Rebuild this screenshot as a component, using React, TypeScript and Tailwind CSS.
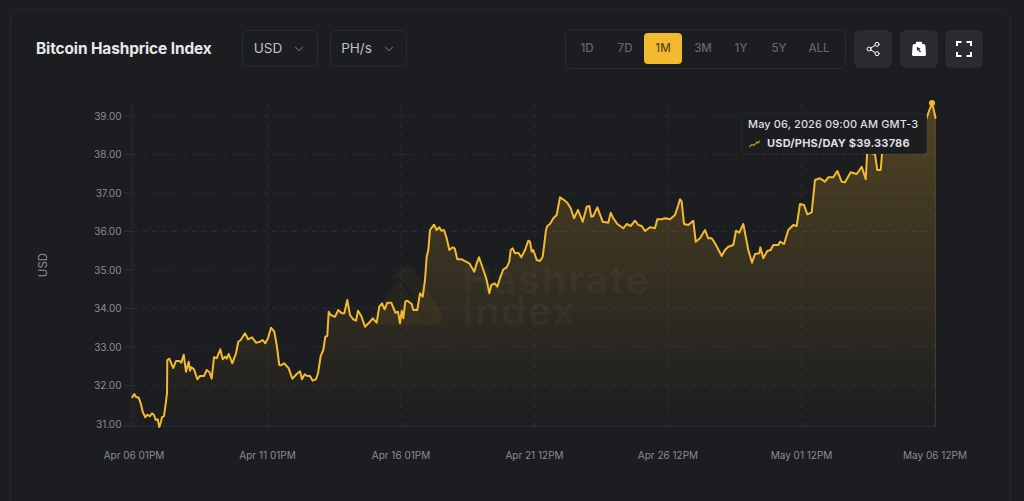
import { ChevronDown, Share2 } from 'lucide-react';

// 从参考图放大区域量出来的折线点，坐标换算回页面像素
type Pt = [number, number];

const toPage = (ox: number, oy: number, pts: Pt[]): Pt[] => pts.map(([x, y]) => [ox + x / 3, oy + y / 3]);

const linePoints: Pt[] = [
  ...toPage(90, 280, [
    [127,352],[133,342],[138,351],[146,353],[152,370],[158,395],[166,412],[172,404],[180,409],[186,400],[192,405],[197,420],[203,418],[208,441],[213,425],[216,412],[222,408],[228,365],[231,340],[232,240],[238,236],[244,250],[250,264],[258,243],[268,243],[274,248],[281,224],[288,275],[296,245],[300,272],[304,262],[312,268],[322,298],[330,288],[342,288],[350,270],[358,276],[365,296],[372,232],[380,235],[391,208],[398,238],[405,230],[410,236],[416,222],[427,250],[438,220],[445,185],[452,180],[465,160],[474,178],[486,172],[498,188],[510,185],[518,180],[526,190],[534,175],[543,143],[553,155],[560,195],[568,255],[574,256],[582,250],[596,265],[607,296],[620,282],[630,274],[636,298],[644,283],[652,288],[660,288],[668,302],[678,298],[684,280],[692,228],[700,210],[706,170],[712,168],[716,95],[722,105],[735,110],[745,90],[755,100],[763,100],[772,60],[780,105],[790,118],[798,122],[804,92],[814,108],[825,140],[840,125],[848,115],[860,128],[868,80],[876,70],[884,88],[892,68],[904,68],[916,98],[924,95],[930,130],[935,92],[940,115],[946,65],[952,62],[965,72],[970,90],[982,90],[990,40],[998,50],[1005,0],
  ]),
  ...toPage(360, 200, [
    [200,170],[205,150],[210,90],[222,74],[230,90],[238,82],[244,92],[252,90],[260,115],[268,150],[278,142],[284,145],[292,178],[305,178],[318,185],[328,190],[343,215],[350,190],[357,172],[365,195],[372,215],[380,240],[388,280],[394,255],[404,250],[412,260],[420,235],[430,208],[440,202],[448,185],[452,150],[458,145],[465,160],[475,158],[484,172],[495,150],[505,122],[510,125],[515,155],[520,150],[530,180],[540,183],[548,170],[558,90],[562,78],[570,72],[580,55],[590,45],[600,-8],[612,0],[622,8],[632,25],[642,55],[654,30],[668,65],[680,20],[688,18],[694,50],[700,48],[712,22],[728,65],[745,68],[752,38],[760,55],[772,72],[790,85],[800,72],[812,78],[825,62],[835,75],[845,78],[855,93],[870,82],[885,85],[892,58],[905,58],[915,55],[930,58],[945,45],[955,15],[960,-2],[965,5],[972,72],[985,75],[1000,62],
  ]),
  ...toPage(680, 150, [
    [47,275],[60,265],[75,240],[85,265],[95,265],[105,280],[125,318],[135,300],[145,290],[160,285],[168,242],[178,248],[190,222],[205,300],[216,338],[225,312],[238,310],[241,292],[250,325],[262,303],[272,300],[280,285],[295,285],[300,275],[312,282],[325,240],[340,225],[350,228],[360,162],[372,165],[382,193],[395,187],[405,90],[420,85],[435,95],[445,82],[460,82],[472,63],[485,95],[495,97],[512,67],[530,72],[545,50],[557,88],[562,0],[565,-10],[575,10],[585,12],[592,60],[602,60],[607,0],
  ]),
  [884, 140], [890, 135], [900, 130], [915, 125], [926, 120], [929, 111], [932, 103], [934, 111], [935.5, 118],
];

const linePath = linePoints.map(([x, y], i) => `${i ? 'L' : 'M'}${x.toFixed(1)} ${y.toFixed(1)}`).join(' ');
const areaPath = `${linePath} L935.5 426 L132 426 Z`;

const yTicks = [
  { label: '39.00', y: 116 },
  { label: '38.00', y: 154.5 },
  { label: '37.00', y: 193 },
  { label: '36.00', y: 231.5 },
  { label: '35.00', y: 270 },
  { label: '34.00', y: 308.5 },
  { label: '33.00', y: 347 },
  { label: '32.00', y: 385.5 },
  { label: '31.00', y: 424 },
];

const xTicks = [
  { label: 'Apr 06 01PM', x: 134 },
  { label: 'Apr 11 01PM', x: 267.5 },
  { label: 'Apr 16 01PM', x: 401 },
  { label: 'Apr 21 12PM', x: 534.5 },
  { label: 'Apr 26 12PM', x: 668 },
  { label: 'May 01 12PM', x: 801.5 },
  { label: 'May 06 12PM', x: 935 },
];

const ranges = [
  { label: '1D', cls: 'w-[38px]' },
  { label: '7D', cls: 'w-[38px]' },
  { label: '1M', cls: 'w-[38px] bg-[#f3ba2f] text-[#5c4b1d]' },
  { label: '3M', cls: 'w-[38px] ml-[2px]' },
  { label: '1Y', cls: 'w-[38px]' },
  { label: '5Y', cls: 'w-[38px]' },
  { label: 'ALL', cls: 'w-[42px]' },
];

function Dropdown({ label, width }: { label: string; width: string }) {
  return (
    <div className={`${width} h-[37px] flex items-center justify-center gap-[10px] rounded-md border border-[#2a2b2f] text-[13.5px] text-[#c0c1c3]`}>
      <span>{label}</span>
      <ChevronDown className="w-[14px] h-[14px] text-[#6f7177]" strokeWidth={1.75} />
    </div>
  );
}

function IconButton({ children }: { children: React.ReactNode }) {
  return (
    <button className="w-[38px] h-[38px] rounded-md bg-[#2a2b30] flex items-center justify-center text-white">
      {children}
    </button>
  );
}

function Chart() {
  return (
    <svg className="block w-[1000px] h-[431px]" viewBox="11 70 1000 431" fontFamily="Inter, sans-serif">
      <defs>
        <linearGradient id="hashArea" gradientUnits="userSpaceOnUse" x1="0" y1="103" x2="0" y2="426">
          <stop offset="0" stopColor="#f3ba2f" stopOpacity="0.25" />
          <stop offset="1" stopColor="#f3ba2f" stopOpacity="0" />
        </linearGradient>
      </defs>

      {/* 网格 */}
      {yTicks.map((t) => (
        <g key={t.label}>
          <line x1="124" x2="132" y1={t.y} y2={t.y} stroke="#2e2f33" />
          <line x1="132" x2="935" y1={t.y} y2={t.y} stroke="#2a2b2f" strokeDasharray="5 5" />
          <text x="121.5" y={t.y + 3.5} textAnchor="end" fontSize="10" fill="#8a8c91">{t.label}</text>
        </g>
      ))}
      {xTicks.map((t) => (
        <g key={t.label}>
          <line x1={t.x} x2={t.x} y1="103" y2="435" stroke="#2a2b2f" strokeDasharray="5 5" />
          <text x={t.x} y="459" textAnchor="middle" fontSize="10" fill="#8a8c91">{t.label}</text>
        </g>
      ))}
      <line x1="131.5" x2="131.5" y1="103" y2="426" stroke="#2a2b2f" />
      <line x1="124" x2="936" y1="426.5" y2="426.5" stroke="#2e2f33" />
      <text transform="translate(47 265) rotate(-90)" textAnchor="middle" fontSize="11.5" fill="#8a8c91">USD</text>

      {/* 水印 */}
      <g fill="#f3ba2f" fillOpacity="0.05">
        <path d="M368 325 L395 283 Q398 279 402 283 L419 311 Q423 318 428 325 Z" />
        <path d="M388 281 L402 268 Q407 263 412 268 L441 311 Q447 325 432 325 L428 325 Q416 298 403 282 Q396 276 388 281 Z" />
      </g>
      <g fill="#ffffff" fillOpacity="0.03" fontSize="40" fontWeight="700" letterSpacing="1.4">
        <text x="462" y="294">Hashrate</text>
        <text x="462" y="325">Index</text>
      </g>

      {/* 折线和面积 */}
      <path d={areaPath} fill="url(#hashArea)" />
      <line x1="935.5" x2="935.5" y1="118" y2="426" stroke="#f3ba2f" strokeOpacity="0.15" />
      <path d={linePath} fill="none" stroke="#f3ba2f" strokeWidth="2" strokeLinejoin="round" strokeLinecap="round" />
      <circle cx="932" cy="103" r="3" fill="#f3ba2f" />
    </svg>
  );
}

export default function App() {
  return (
    <div className="h-[501px] w-[1024px] overflow-hidden bg-[#1c1d20] pt-[9px] pl-[10px] pr-[13px] font-['Inter',sans-serif]">
      <div className="h-[520px] rounded-[10px] border border-[#26272a]">
        {/* 顶部工具栏 */}
        <div className="flex items-center h-[60px] pt-[17px] pl-[25px]">
          <h1 className="w-[206px] mt-[1px] text-[15.4px] font-bold tracking-[-0.1px] text-[#e8e8e9] whitespace-nowrap">Bitcoin Hashprice Index</h1>
          <div className="flex gap-[12px]">
            <Dropdown label="USD" width="w-[76px]" />
            <Dropdown label="PH/s" width="w-[77px]" />
          </div>
          <div className="ml-[158px] flex items-center gap-[8px]">
            <div className="w-[281px] h-[40px] flex items-center px-[2px] rounded-md border border-[#2a2b2f] text-[11.5px] font-medium text-[#63656c]">
              {ranges.map((r) => (
                <div key={r.label} className={`h-[31px] rounded flex items-center justify-center ${r.cls}`}>{r.label}</div>
              ))}
            </div>
            <div className="flex gap-[7.5px]">
              <IconButton><Share2 className="w-[16px] h-[16px]" strokeWidth={1.5} /></IconButton>
              <IconButton>
                <svg width="16" height="16" viewBox="0 0 16 16">
                  <path fill="#ffffff" fillRule="evenodd" d="M4.8 2.2 Q4.8 .8 6.2 .8 H9.8 Q11.2 .8 11.2 2.2 V3 H12.6 Q14.2 3 14.4 4.6 L15 13.4 Q15 15 13.4 15 H2.6 Q1 15 1 13.4 L1.6 4.6 Q1.8 3 3.4 3 H4.8 Z M5.8 6 L6 10 L7.2 9 L9 11.5 L10 10.6 L8.2 8.2 L9.7 7.4 Z" />
                </svg>
              </IconButton>
              <IconButton>
                <svg width="16" height="16" viewBox="0 0 16 16" fill="none" stroke="#ffffff" strokeWidth="2">
                  <path d="M1 5 V1 H5.5 M10.5 1 H15 V5 M15 11 V15 H10.5 M5.5 15 H1 V11" />
                </svg>
              </IconButton>
            </div>
          </div>
        </div>

        {/* 图表 */}
        <div className="relative">
          <Chart />
          <div className="absolute left-[730px] top-[43px] w-[186px] h-[41px] rounded-sm border border-[#26272b] bg-[#1c1d20] pl-[6px] pt-[1px] text-[11px] leading-[19px] text-[#dfdfe0]">
            <div className="font-medium tracking-[0.1px] whitespace-nowrap">May 06, 2026 09:00 AM GMT-3</div>
            <div className="flex items-center gap-[7px] pl-[1px] font-bold tracking-[0.2px] whitespace-nowrap">
              <svg width="11" height="8" viewBox="0 0 11 8" fill="none" stroke="#b68d26" strokeWidth="1.2">
                <path d="M0 7 L3 4.5 L5 5.5 L8 2 L9 3 L11 0.5" />
              </svg>
              <span>USD/PHS/DAY $39.33786</span>
            </div>
          </div>
        </div>
      </div>
    </div>
  );
}
